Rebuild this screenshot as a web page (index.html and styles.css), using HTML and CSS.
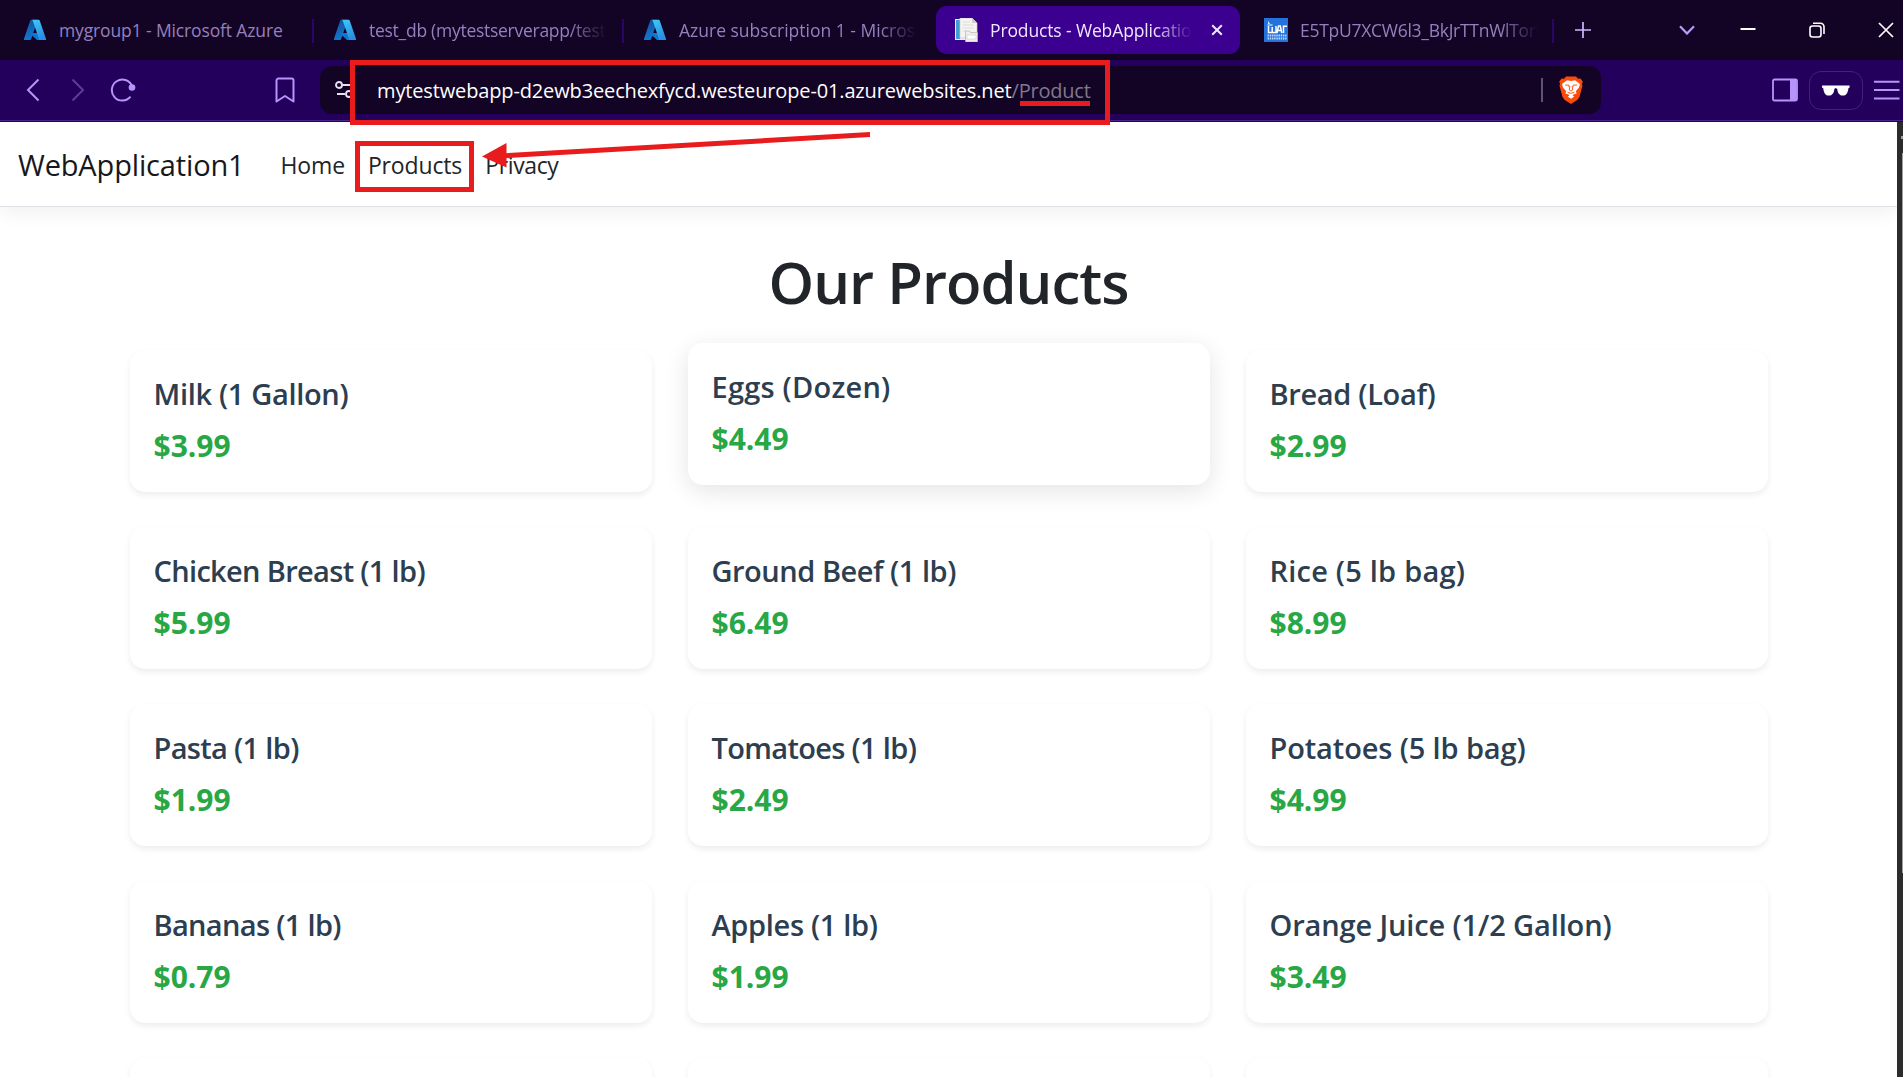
FILE: index.html
```html
<!DOCTYPE html>
<html lang="en">
<head>
<meta charset="utf-8">
<title>Products - WebApplication1</title>
<link rel="stylesheet" href="styles.css">
</head>
<body>
<svg class="defs" aria-hidden="true">
  <defs>
    <linearGradient id="azA" x1="0" y1="0" x2="0" y2="1"><stop offset="0" stop-color="#12559f"/><stop offset="1" stop-color="#1577cf"/></linearGradient>
    <linearGradient id="azB" x1="0" y1="0" x2="0.4" y2="1"><stop offset="0" stop-color="#42cbf7"/><stop offset="1" stop-color="#2a8fe0"/></linearGradient>
    <symbol id="azure" viewBox="0 0 22 22">
      <path d="M7.3 .8h6.6L7.1 20.3a1.3 1.3 0 0 1-1.2.8H1.2A1.1 1.1 0 0 1 .1 19.600L6.200 1.600A1.200 1.200 0 0 1 7.300.8z" fill="url(#azA)"/>
      <path d="M17 14H6.800a.6.6 0 0 0-.4 1l6.600 6.100h5.800z" fill="#0a78d4"/>
      <path d="M15.700 1.600A1.200 1.200 0 0 0 14.600.8H7.600a1.200 1.200 0 0 1 1.100.8l6.100 18a1.100 1.100 0 0 1-1.100 1.500h7.100a1.100 1.100 0 0 0 1.100-1.500z" fill="url(#azB)"/>
    </symbol>
  </defs>
</svg>

<header class="browser">
  <div class="tabstrip">
    <div class="tab"><svg class="fav"><use href="#azure"/></svg><span class="tab-label narrow">mygroup1 - Microsoft Azure</span></div>
    <div class="tab"><svg class="fav"><use href="#azure"/></svg><span class="tab-label faded snug">test_db (mytestserverapp/test_db)</span></div>
    <div class="tab no-rule"><svg class="fav"><use href="#azure"/></svg><span class="tab-label faded">Azure subscription 1 - Microsoft Azure</span></div>
    <div class="tab active">
      <svg class="fav page-fav" viewBox="0 0 24 24">
        <path d="M1 1h14v21H1z" fill="#e9eef2"/><path d="M2 2h4v19H2z" fill="#3f9fd0"/>
        <path d="M6 0h12l5 5v15H6z" fill="#f4f4f2" stroke="#c9c9c9" stroke-width=".7"/>
        <path d="M18 0v5h5z" fill="#cfcfcf"/><path d="M8.500 4h7M8.500 7h11M8.500 10h11M8.500 13h4" stroke="#dcdcdc"/>
        <path d="M11.500 13h4l1 1.500h7V24h-12z" fill="#eeeeec" stroke="#b5b5b5" stroke-width=".7"/><path d="M13 17h9v4h-9z" fill="#fff" stroke="#ccc" stroke-width=".6"/>
      </svg>
      <span class="tab-label faded">Products - WebApplication1</span>
      <svg class="close" viewBox="0 0 12 12"><path d="M1.200 1.200l9.600 9.600M10.800 1.200l-9.600 9.600" stroke="#efe8ff" stroke-width="2"/></svg>
    </div>
    <div class="tab">
      <svg class="fav step-fav" viewBox="0 0 24 24">
        <path d="M0 0h24v24H0z" fill="#2473dc"/>
        <path d="M4.500 8v6.500h7.500V8M8.200 9v5M13 15l1.500-7h1.800l1.500 7M14 12.500h3M19.500 15V8.200H23" fill="none" stroke="#fff" stroke-width="1.500"/>
        <path d="M4.200 3l1.800 3h-2z" fill="#fff"/><path d="M3.500 7h5" stroke="#fff"/>
        <path d="M3.500 17.500h19M3.500 20.500h19" stroke="#b9d6ff" stroke-width="1.800" stroke-dasharray="1.500 .7"/>
      </svg>
      <span class="tab-label faded snug">E5TpU7XCW6l3_BkJrTTnWlTonQ</span>
    </div>
    <svg class="new-tab" viewBox="0 0 16 16"><path d="M8 0v16M0 8h16" stroke="#cdb8ff" stroke-width="1.700"/></svg>
    <div class="window-buttons">
      <svg class="w-chevron" viewBox="0 0 16 10"><path d="M1 1.200l7 7.300 7-7.300" fill="none" stroke="#b99cff" stroke-width="2.200"/></svg>
      <svg class="w-btn" viewBox="0 0 16 16"><path d="M.5 7h15" stroke="#fff" stroke-width="2"/></svg>
      <svg class="w-btn" viewBox="0 0 16 16"><rect x="1" y="4" width="11" height="11" rx="2.500" fill="none" stroke="#fff" stroke-width="1.600"/><path d="M4 1.200h7.500A3.500 3.500 0 0 1 15 4.700V12" fill="none" stroke="#fff" stroke-width="1.600"/></svg>
      <svg class="w-btn" viewBox="0 0 16 16"><path d="M1 1l14 14M15 1L1 15" stroke="#fff" stroke-width="1.700"/></svg>
    </div>
  </div>

  <div class="toolbar">
    <svg class="nav-arrow" viewBox="0 0 14 24"><path d="M12.500 1.500L2 12l10.500 10.500" fill="none" stroke="#b595fc" stroke-width="2"/></svg>
    <svg class="nav-arrow dim" viewBox="0 0 14 24"><path d="M1.500 1.500L12 12 1.500 22.500" fill="none" stroke="#5f3a9e" stroke-width="2"/></svg>
    <svg class="reload" viewBox="0 0 26 24"><path d="M22 8A10.500 10.500 0 1 0 20.500 18.700" fill="none" stroke="#b595fc" stroke-width="2"/><circle cx="22" cy="9.500" r="3.300" fill="#b595fc"/></svg>
    <svg class="bookmark" viewBox="0 0 20 26"><path d="M1.500 3.500a2 2 0 0 1 2-2h13a2 2 0 0 1 2 2V24.500L10 19l-8.500 5.500z" fill="none" stroke="#b595fc" stroke-width="2" stroke-linejoin="round"/></svg>
    <div class="urlbar">
      <svg class="tune" viewBox="0 0 18 18"><g fill="none" stroke="#e6e0f0" stroke-width="1.900"><circle cx="4" cy="4" r="3"/><path d="M7 4h10M2 13h8"/><circle cx="14" cy="13" r="3"/></g></svg>
      <div class="url"><span class="host">mytestwebapp-d2ewb3eechexfycd.westeurope-01.azurewebsites.net</span><span class="path">/Product</span></div>
      <span class="url-rule"></span>
      <svg class="lion" viewBox="0 0 24 28">
        <path d="M7 .5h10l2 2.200 2.500-.3 2.300 3.300-.9 2.300.6 1.500-3 11.500-2.300 3L12 28l-6.200-4-2.300-3L.5 9.500 1.100 8 .2 5.700l2.300-3.300 2.500.3z" fill="#fb4b0a"/>
        <path d="M8 4.300l4 .8 4-.8 5 3.700-1 3.500-3.200 3.700.8 2.300-2.600.8-1.500 1.200 1.800 1L12 22.800 8.700 20.500l1.800-1L9 18.300l-2.600-.8.8-2.300L4 11.500 3 8z" fill="#fff"/>
        <path d="M6 9l4 .2-.4 1.500M18 9l-4 .2.4 1.500M10.800 10l-.5 4 1.700 1 1.700-1-.5-4M8.500 16.200l3.500 1.200 3.500-1.200" fill="none" stroke="#fb4b0a" stroke-width=".9"/>
      </svg>
    </div>
    <svg class="panel" viewBox="0 0 26 24"><rect x="1" y="1.500" width="24" height="21" rx="1.500" fill="none" stroke="#b595fc" stroke-width="1.800"/><path d="M18 1.500h6.500v21H18z" fill="#b595fc"/></svg>
    <div class="private"><svg viewBox="0 0 28 11"><path d="M0 .4h27.600v2.200l-1.200.6c-.4 4.600-2.200 7.400-5.500 7.400-3.500 0-5.300-2.400-5.600-6.600L13.800 3l-1.500 1c-.3 4.200-2 6.600-5.500 6.600-3.300 0-5.100-2.800-5.500-7.400L0 2.600z" fill="#fff"/></svg></div>
    <svg class="menu" viewBox="0 0 26 20"><path d="M0 1.800h25.500M0 10h25.500M0 18.500h25.500" stroke="#b595fc" stroke-width="2"/></svg>
  </div>
</header>

<div class="viewport">
  <div class="page">
    <nav class="navbar">
      <a class="brand">WebApplication1</a>
      <a class="nav-link">Home</a>
      <a class="nav-link">Products</a>
      <a class="nav-link privacy">Privacy</a>
    </nav>
    <main class="content">
      <h1>Our Products</h1>
      <div class="grid">
        <article class="card"><h2 class="ls-tight">Milk (1 Gallon)</h2><p>$3.99</p></article>
        <article class="card raised"><h2 class="ls-wide">Eggs (Dozen)</h2><p>$4.49</p></article>
        <article class="card"><h2 class="ls-tight">Bread (Loaf)</h2><p>$2.99</p></article>
        <article class="card"><h2 class="ls-tighter">Chicken Breast (1 lb)</h2><p>$5.99</p></article>
        <article class="card"><h2 class="ls-close">Ground Beef (1 lb)</h2><p>$6.49</p></article>
        <article class="card"><h2 class="ls-wide">Rice (5 lb bag)</h2><p>$8.99</p></article>
        <article class="card"><h2 class="ls-tighter">Pasta (1 lb)</h2><p>$1.99</p></article>
        <article class="card"><h2 class="ls-tighter">Tomatoes (1 lb)</h2><p>$2.49</p></article>
        <article class="card"><h2 class="ls-snug">Potatoes (5 lb bag)</h2><p>$4.99</p></article>
        <article class="card"><h2 class="ls-tighter">Bananas (1 lb)</h2><p>$0.79</p></article>
        <article class="card"><h2 class="ls-tight">Apples (1 lb)</h2><p>$1.99</p></article>
        <article class="card"><h2 class="ls-snug">Orange Juice (1/2 Gallon)</h2><p>$3.49</p></article>
        <article class="card"></article>
        <article class="card"></article>
        <article class="card"></article>
      </div>
    </main>
  </div>
  <div class="scrollbar"><span class="scroll-arrow"></span><span class="scroll-thumb"></span></div>
</div>

<div class="mark mark-url"></div>
<div class="mark mark-nav"></div>
<div class="mark-underline"></div>
<svg class="mark-arrow" viewBox="0 0 400 40"><path d="M20 26L390 4.500" stroke="#e81c1c" stroke-width="5"/><path d="M2 26.500L26.500 13v24.500z" fill="#e81c1c"/></svg>
</body>
</html>
```
FILE: styles.css
```css
* { box-sizing: border-box; }
body {
  margin: 0;
  height: 1077px;
  overflow: hidden;
  position: relative;
  display: flex;
  flex-direction: column;
  background: #fff;
  font-family: "Open Sans", "Noto Sans", sans-serif;
}
svg { display: block; flex: none; }
.defs { position: absolute; width: 0; height: 0; }

/* Browser chrome */
.browser { flex: none; height: 122px; background: #22005c; border-bottom: 1px solid #22005c; box-shadow: inset 0 -1px #4b2488; }
.tabstrip { height: 60px; background: #130425; display: flex; align-items: center; padding: 0 9px 0 6px; gap: 6px; }
.tab { position: relative; flex: none; width: 304px; height: 48px; padding-left: 18px; display: flex; align-items: center; gap: 13px; color: #9580bd; font-size: 17.5px; }
.tab::after { content: ""; position: absolute; right: -4px; top: 13px; width: 2px; height: 24px; background: #2a0563; }
.tab.no-rule::after, .tab.active::after { display: none; }
.tab.active { background: #3b008f; color: #eee6ff; border-radius: 11px; }
.fav { width: 22px; height: 22px; }
.page-fav, .step-fav { width: 24px; height: 24px; }
.page-fav + .tab-label, .step-fav + .tab-label { margin-left: -1px; }
.tab-label { width: 238px; overflow: hidden; white-space: nowrap; line-height: 28px; }
.tab-label.snug { letter-spacing: -0.27px; }
.tab-label.narrow { letter-spacing: -0.13px; }
.tab.active .tab-label { width: 202px; letter-spacing: -0.13px; }
.faded { -webkit-mask-image: linear-gradient(90deg, #000 calc(100% - 38px), transparent); mask-image: linear-gradient(90deg, #000 calc(100% - 38px), transparent); }
.close { width: 12px; height: 12px; margin-left: 6px; }
.new-tab { width: 16px; height: 16px; margin-left: 19px; }
.window-buttons { margin-left: auto; display: flex; align-items: center; gap: 53px; }
.w-chevron { width: 16px; height: 10px; margin-right: -8px; }
.w-btn { width: 16px; height: 16px; }

.toolbar { height: 60px; display: flex; align-items: center; padding-left: 26px; }
.nav-arrow { width: 14px; height: 24px; }
.nav-arrow.dim { margin-left: 31px; }
.reload { width: 26px; height: 24px; margin-left: 25px; }
.bookmark { width: 20px; height: 26px; margin-left: 139px; }
.urlbar { flex: none; width: 1281px; height: 48px; margin-left: 25px; padding: 0 18px 0 15px; border-radius: 12px; background: #130425; display: flex; align-items: center; }
.tune { width: 18px; height: 18px; }
.url { margin-left: 24px; padding-top: 1px; font-size: 20px; line-height: 28px; white-space: nowrap; }
.host { color: #fff; letter-spacing: -0.14px; }
.path { color: #7f788e; letter-spacing: -0.2px; }
.url-rule { margin-left: auto; width: 2px; height: 24px; background: #5f546e; }
.lion { width: 24px; height: 28px; margin-left: 16px; }
.panel { width: 26px; height: 24px; margin-left: 171px; }
.private { width: 54px; height: 39px; margin-left: 11px; border: 1.5px solid #43207f; border-radius: 12px; display: flex; align-items: center; justify-content: center; }
.private svg { width: 28px; height: 11px; }
.menu { width: 26px; height: 20px; margin-left: 11px; }

/* Web page */
.viewport { flex: 1; min-height: 0; display: flex; }
.page { width: 1897px; overflow: hidden; }
.navbar { height: 85px; display: flex; align-items: center; padding-left: 18px; border-bottom: 1px solid #dee2e6; box-shadow: 0 6px 18px rgba(0, 0, 0, .06); }
.brand { font-size: 29px; color: #16181b; margin-right: 36px; letter-spacing: -0.15px; }
.nav-link { font-size: 23px; color: #212529; margin-right: 23px; padding-top: 2px; letter-spacing: -0.15px; }
.privacy { letter-spacing: -0.35px; }
.content { width: 1638px; margin: 0 auto; padding-top: 39px; }
h1 { margin: 0 0 32px; font-size: 58px; line-height: 72px; font-weight: 600; letter-spacing: -0.98px; text-align: center; color: #212529; }
.grid { display: grid; grid-template-columns: repeat(3, 1fr); gap: 35px 36px; }
.card { height: 142px; padding: 26px 24px 24px; border-radius: 15px; background: #fff; box-shadow: 0 3px 6px rgba(0, 0, 0, .075); }
.raised { transform: translateY(-7px); box-shadow: 0 6px 24px rgba(0, 0, 0, .11); }
.card h2 { margin: 0 0 11px; font-size: 29px; line-height: 36px; font-weight: 600; color: #2c3e50; white-space: nowrap; }
.card p { margin: 0; font-size: 30px; line-height: 45px; font-weight: 700; color: #28a745; }
.card .ls-snug { letter-spacing: -0.13px; }
.card .ls-tight { letter-spacing: -0.33px; }
.card .ls-close { letter-spacing: -0.47px; }
.card .ls-tighter { letter-spacing: -0.67px; }
.card .ls-wide { letter-spacing: 0.22px; }

.scrollbar { flex: none; width: 6px; background: #2c2c2c; display: flex; flex-direction: column; align-items: flex-end; }
.scroll-arrow { width: 2px; height: 3px; margin-top: 14px; background: #9f9f9f; }
.scroll-thumb { width: 1px; height: 720px; margin-top: 14px; background: #9f9f9f; }

/* Red annotations laid over the window */
.mark { position: absolute; border: 5px solid #e81c1c; }
.mark-url { left: 350px; top: 60px; width: 760px; height: 65px; }
.mark-nav { left: 355px; top: 141px; width: 119px; height: 51px; }
.mark-underline { position: absolute; left: 1020px; top: 101px; width: 70px; height: 5px; background: #e81c1c; }
.mark-arrow { position: absolute; left: 480px; top: 130px; width: 400px; height: 40px; }
```
